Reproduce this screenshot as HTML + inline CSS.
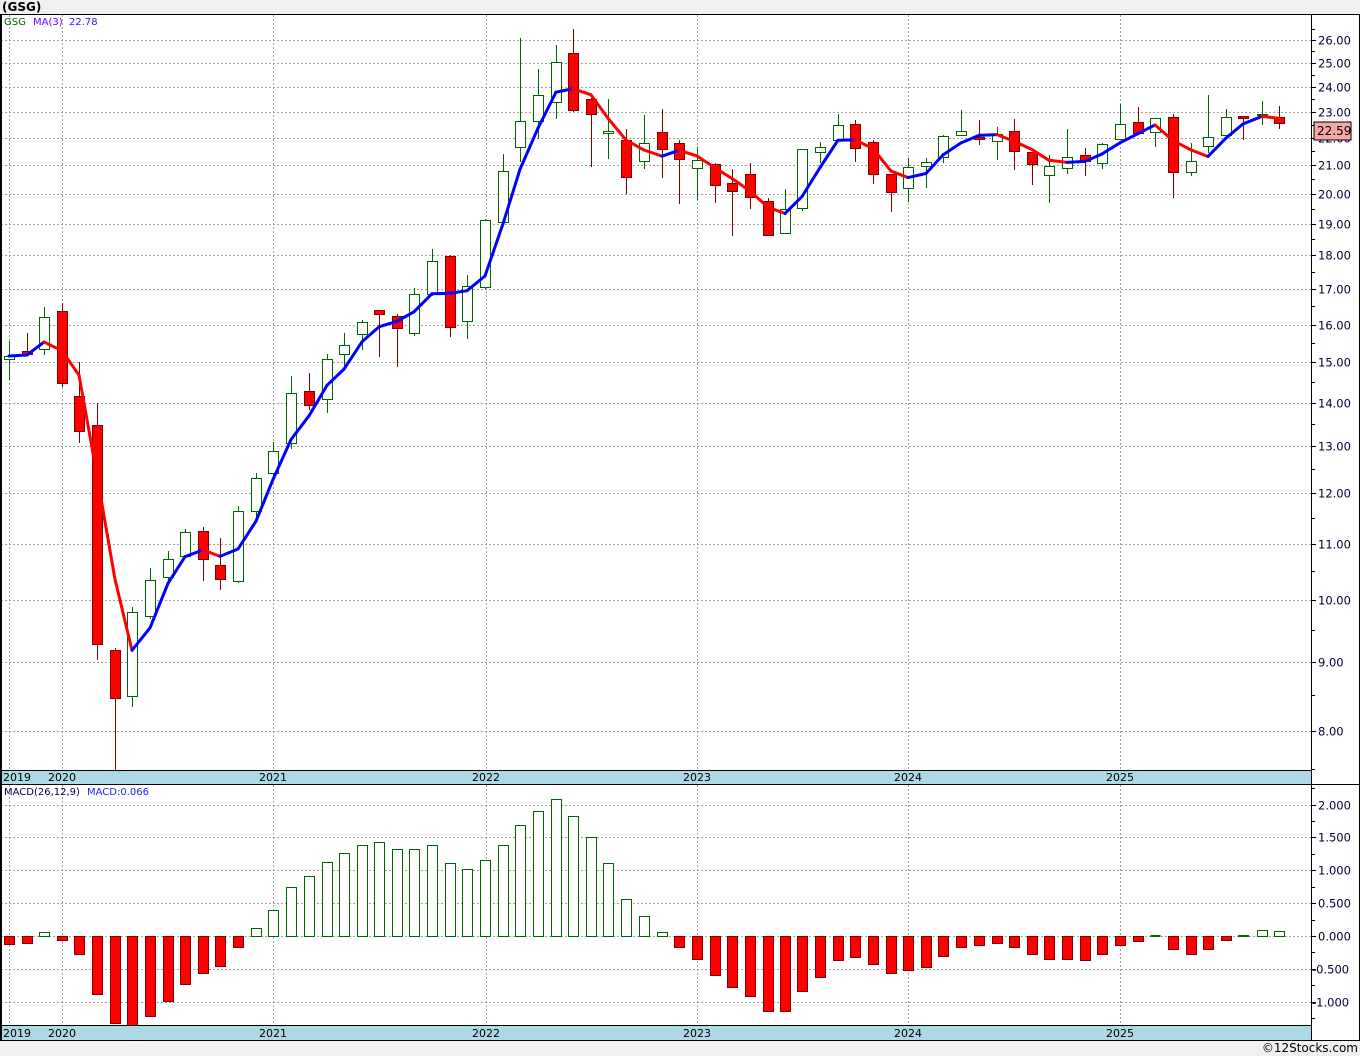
<!DOCTYPE html>
<html><head><meta charset="utf-8"><style>
html,body{margin:0;padding:0;background:#f0f0f0;}
body{width:1360px;height:1056px;overflow:hidden;position:relative;font-family:"DejaVu Sans","Liberation Sans",sans-serif;}
svg{position:absolute;left:0;top:0;}
</style></head><body>
<svg id="s" width="1360" height="1056" xmlns="http://www.w3.org/2000/svg" font-family="DejaVu Sans, Liberation Sans, sans-serif">
<rect x="0" y="14" width="1360" height="1026" fill="#fff"/>
<text x="2" y="11" font-size="12" font-weight="bold" fill="#000">(GSG)</text>
<g id="grid"></g>
<g id="main"></g>
<rect x="1" y="770" width="1310" height="14" fill="#add8e6"/>
<rect x="1" y="1025" width="1310" height="15" fill="#add8e6"/>
<line x1="0" y1="770.5" x2="1311" y2="770.5" stroke="#000"/>
<line x1="0" y1="784.5" x2="1360" y2="784.5" stroke="#000"/>
<line x1="0" y1="1025.5" x2="1311" y2="1025.5" stroke="#000"/>
<line x1="0" y1="14.5" x2="1360" y2="14.5" stroke="#000"/>
<line x1="0" y1="1040.5" x2="1360" y2="1040.5" stroke="#000"/>
<line x1="1" y1="14" x2="1" y2="1040" stroke="#000" stroke-width="2"/>
<line x1="1311.5" y1="14" x2="1311.5" y2="1040" stroke="#000"/>
<line x1="1359.5" y1="14" x2="1359.5" y2="1040" stroke="#000"/>
<g font-size="11" fill="#000">
<text x="3" y="781">2019</text><text x="48" y="781">2020</text><text x="259" y="781">2021</text><text x="472" y="781">2022</text><text x="683" y="781">2023</text><text x="894" y="781">2024</text><text x="1106" y="781">2025</text>
<text x="3" y="1037">2019</text><text x="48" y="1037">2020</text><text x="259" y="1037">2021</text><text x="472" y="1037">2022</text><text x="683" y="1037">2023</text><text x="894" y="1037">2024</text><text x="1106" y="1037">2025</text>
</g>
<g font-size="10"><text x="4" y="25" fill="#006400">GSG</text><text x="33" y="25" fill="#6a00ff">MA(3)</text><text x="69" y="25" fill="#2020ff">22.78</text></g>
<g font-size="10"><text x="4" y="795" fill="#000040">MACD(26,12,9)</text><text x="87" y="795" fill="#2020ff">MACD:0.066</text></g>
<g id="axis" font-size="11.5" fill="#000030"></g>
<rect x="1314" y="122" width="37" height="18" fill="#f5a9a4" stroke="#000" stroke-width="1"/>
<text x="1317" y="135" font-size="12" fill="#000">22.59</text>
<text x="1358" y="1052" font-size="12" fill="#000" text-anchor="end">©12Stocks.com</text>
</svg>
<script>
var NS="http://www.w3.org/2000/svg";
function el(p,t,a){var e=document.createElementNS(NS,t);for(var k in a)e.setAttribute(k,a[k]);p.appendChild(e);return e;}
var grid=document.getElementById('grid'),main=document.getElementById('main'),axis=document.getElementById('axis');
function py(p){return 40+586*(Math.log(26)-Math.log(p));}
function yp(y){return Math.exp(Math.log(26)-(y-40)/586);}
var dash={stroke:"#a0a0a0","stroke-width":1,"stroke-dasharray":"2,2"};
for(var p=8;p<=26;p++){var y=Math.round(py(p))+0.5;
 el(grid,'line',Object.assign({x1:1,y1:y,x2:1311,y2:y},dash));
 el(grid,'line',{x1:1311,y1:y,x2:1316,y2:y,stroke:"#000"});
 var t=el(axis,'text',{x:1318,y:y+4});t.textContent=p.toFixed(2);}
for(var p=7.5;p<=26.5;p+=0.5){if(p%1==0)continue;var y=Math.round(py(p))+0.5;el(grid,'line',{x1:1311,y1:y,x2:1315,y2:y,stroke:"#000"});}
var mv=[2,1.5,1,0.5,0,-0.5,-1];
mv.forEach(function(v){var y=Math.round(936-v*65.7)+0.5;
 el(grid,'line',Object.assign({x1:1,y1:y,x2:1311,y2:y},dash));
 el(grid,'line',{x1:1311,y1:y,x2:1316,y2:y,stroke:"#000"});
 var t=el(axis,'text',{x:v<0?1312:1318,y:y+4});t.textContent=v.toFixed(3);});
for(var v=-1.25;v<=2.3;v+=0.25){if(Math.abs(v*2-Math.round(v*2))<0.01)continue;var y=Math.round(936-v*65.7)+0.5;el(grid,'line',{x1:1311,y1:y,x2:1315,y2:y,stroke:"#000"});}
[9,62,273,486,697,908,1120].forEach(function(x){
 el(grid,'line',Object.assign({x1:x+0.5,y1:15,x2:x+0.5,y2:770},dash));
 el(grid,'line',Object.assign({x1:x+0.5,y1:785,x2:x+0.5,y2:1025},dash));
 el(grid,'line',Object.assign({x1:x+0.5,y1:1025,x2:x+0.5,y2:1040},dash));});
var C=[[9,341,356,359,380,1],[27,333,351,354,356,0],[44,307,317,349,355,1],[62,303,311,383,387,0],[79,362,396,431,443,0],[97,403,425,644,660,0],[115,648,650,698,770,0],[132,607,612,696,707,1],[150,568,580,616,619,1],[168,551,559,577,580,1],[185,529,532,556,558,1],[203,527,531,559,581,0],[220,538,565,579,590,0],[238,506,511,581,583,1],[256,473,478,511,518,1],[273,442,451,473,477,1],[291,376,393,443,449,1],[309,373,391,405,410,0],[327,354,359,399,413,1],[344,333,345,354,367,1],[362,320,322,334,350,1],[379,310,310,314,357,0],[397,314,316,328,367,0],[414,288,294,333,336,1],[432,249,261,294,296,1],[450,255,256,327,337,0],[467,275,286,321,339,1],[485,219,220,287,289,1],[503,154,171,222,224,1],[520,38,121,147,162,1],[538,69,95,121,139,1],[556,45,62,102,119,1],[573,29,53,110,112,0],[591,98,99,114,167,0],[608,99,131,133,159,1],[626,129,140,177,194,0],[644,115,143,161,169,1],[662,109,132,149,178,0],[679,140,143,159,204,0],[697,147,160,168,200,1],[715,163,164,185,203,0],[732,169,183,191,236,0],[750,163,174,197,209,0],[768,198,201,235,236,0],[785,189,209,233,233,1],[802,149,149,208,211,1],[820,142,147,152,163,1],[838,114,125,140,140,1],[855,120,124,148,162,0],[873,140,142,174,184,0],[891,174,174,192,212,0],[908,158,167,188,202,1],[926,158,162,166,188,1],[943,135,136,157,163,1],[961,110,131,135,136,1],[979,120,137,139,145,0],[997,127,134,141,160,1],[1014,119,131,151,170,0],[1032,152,152,164,185,0],[1049,155,166,175,203,1],[1067,129,157,168,174,1],[1085,148,155,161,176,0],[1102,143,144,163,169,1],[1120,104,124,139,140,1],[1138,107,122,133,135,0],[1155,118,118,132,147,1],[1173,114,117,172,198,0],[1191,143,161,172,176,1],[1208,95,137,146,153,1],[1226,109,117,135,137,1],[1243,116,116,118,140,0],[1262,101,114,115,125,1],[1279,106,117,123,129,0]];
var M=[944,943,932,940,954,994,1023,1025,1016,1001,984,973,966,947,928,910,887,876,862,853,845,842,849,849,845,863,869,860,845,825,811,799,816,837,863,899,916,932,947,959,975,987,996,1011,1011,991,977,960,957,964,973,970,967,956,947,945,943,947,954,959,959,960,954,945,941,936,949,954,949,940,935,930,931];
C.forEach(function(c){var x=c[0],g=c[5],col=g?"#006400":"#800000";
 el(main,'line',{x1:x+0.5,y1:c[1],x2:x+0.5,y2:c[4],stroke:col,"stroke-width":1});
 var h=Math.max(c[3]-c[2],1);
 el(main,'rect',{x:x-4.5,y:c[2]+0.5,width:10,height:h,fill:g?"#fff":"#ff0000",stroke:col,"stroke-width":1});});
var cl=C.map(function(c){return yp(c[5]?c[2]:c[3]);});
var pts=[];for(var i=0;i<C.length;i++){var s=0,n=0;for(var j=Math.max(0,i-2);j<=i;j++){s+=cl[j];n++;}pts.push([C[i][0],py(s/n)]);}
for(var i=1;i<pts.length;i++){var up=pts[i][1]<=pts[i-1][1];
 el(main,'line',{x1:pts[i-1][0],y1:pts[i-1][1],x2:pts[i][0],y2:pts[i][1],stroke:up?"#0000ff":"#ff0000","stroke-width":3,"stroke-linecap":"round"});}
C.forEach(function(c,i){var x=c[0],y=M[i];
 if(y<936){el(main,'rect',{x:x-4.5,y:y+0.5,width:10,height:Math.max(936-y,1),fill:"#fff",stroke:"#006400"});}
 else if(y==936){el(main,'rect',{x:x-4.5,y:935,width:10,height:2,fill:"#006400"});}
 else{el(main,'rect',{x:x-4.5,y:936.5,width:10,height:Math.min(y,1025)-936,fill:"#ff0000",stroke:"#800000"});}});
</script>
</body></html>
